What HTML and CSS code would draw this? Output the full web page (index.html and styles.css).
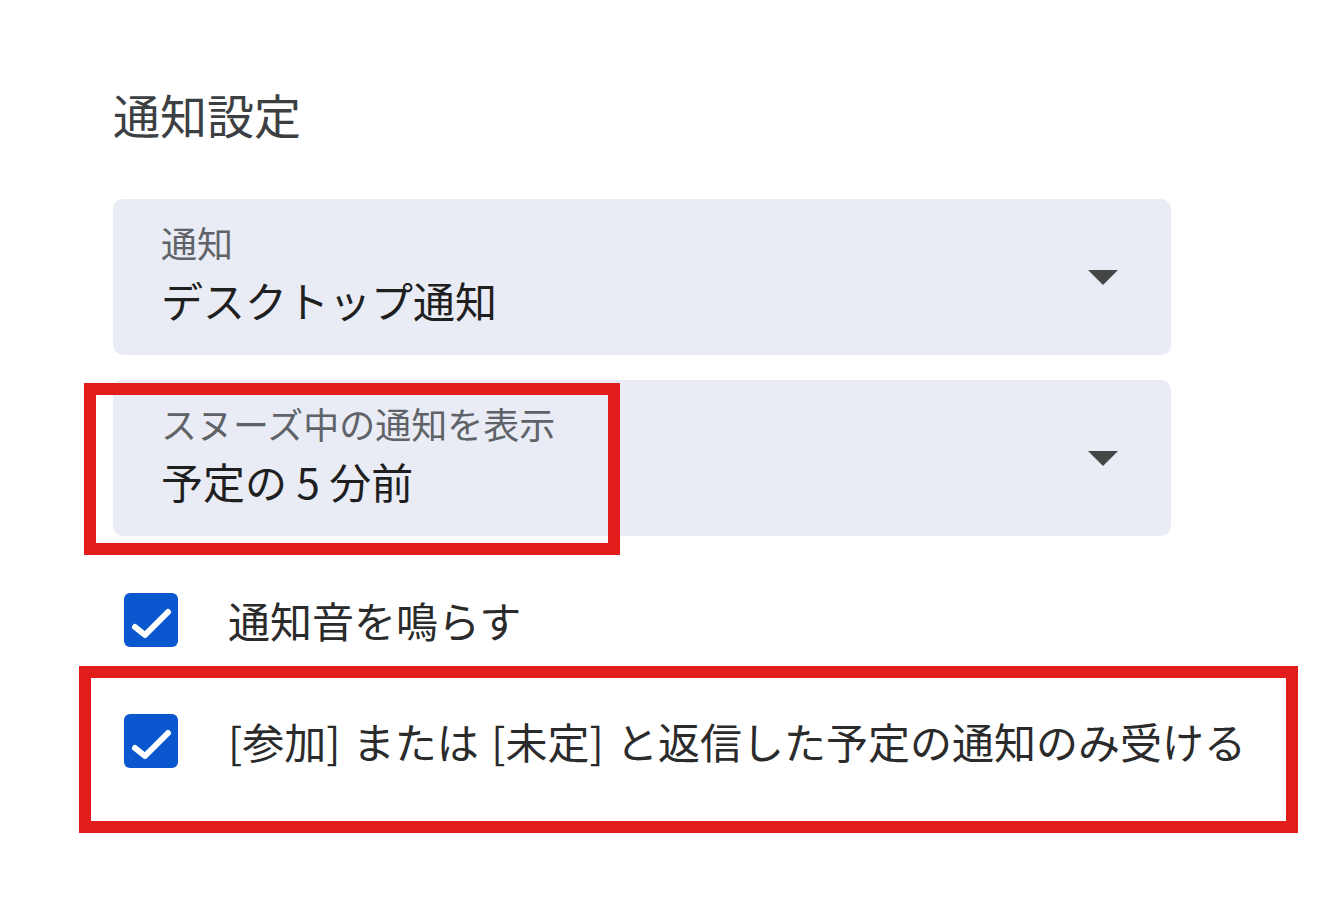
FILE: index.html
```html
<!DOCTYPE html>
<html lang="ja">
<head>
<meta charset="utf-8">
<title>通知設定</title>
<link rel="stylesheet" href="styles.css">
</head>
<body>
<div class="page">
  <h1 class="title">通知設定</h1>
  <div class="selects">
    <div class="select">
      <div class="select-text">
        <div class="label">通知</div>
        <div class="value">デスクトップ通知</div>
      </div>
      <svg class="arrow" width="30" height="15" viewBox="0 0 30 15"><polygon points="0,0 30,0 15,15"/></svg>
    </div>
    <div class="select">
      <div class="select-text">
        <div class="label">スヌーズ中の通知を表示</div>
        <div class="value">予定の 5 分前</div>
      </div>
      <svg class="arrow" width="30" height="15" viewBox="0 0 30 15"><polygon points="0,0 30,0 15,15"/></svg>
    </div>
  </div>
  <div class="checks">
    <div class="check-row">
      <span class="checkbox"><svg width="54" height="54" viewBox="0 0 54 54"><polyline points="11,34 21,42 44,19"/></svg></span>
      <span class="check-label">通知音を鳴らす</span>
    </div>
    <div class="check-row">
      <span class="checkbox"><svg width="54" height="54" viewBox="0 0 54 54"><polyline points="11,34 21,42 44,19"/></svg></span>
      <span class="check-label check-label-long">[参加] または [未定] と返信した予定の通知のみ受ける</span>
    </div>
  </div>
  <div class="mark mark-a"></div>
  <div class="mark mark-b"></div>
</div>
</body>
</html>
```
FILE: styles.css
```css
html, body {
  margin: 0;
  padding: 0;
  background: #ffffff;
}
body {
  font-family: "Noto Sans CJK JP", "Noto Sans", sans-serif;
  color: #1f1f1f;
}
.page {
  position: relative;
  width: 1344px;
  height: 915px;
  box-sizing: border-box;
  padding: 90px 0 0 113px;
  overflow: hidden;
}
.title {
  margin: 0 0 62px 0;
  font-size: 47px;
  line-height: 47px;
  font-weight: 400;
  color: #3c4043;
}
.selects {
  display: flex;
  flex-direction: column;
  gap: 25px;
  width: 1058px;
}
.select {
  display: flex;
  align-items: center;
  justify-content: space-between;
  height: 156px;
  box-sizing: border-box;
  padding: 0 53px 0 48px;
  background: #e9ecf5;
  border-radius: 10px;
}
.select-text {
  align-self: flex-start;
  padding-top: 25px;
  display: flex;
  flex-direction: column;
  gap: 19px;
}
.label {
  font-size: 36px;
  line-height: 36px;
  color: #5f6368;
}
.value {
  font-size: 42px;
  line-height: 42px;
  color: #1f1f1f;
}
.arrow {
  display: block;
  fill: #444746;
}
.checks {
  display: flex;
  flex-direction: column;
  gap: 67px;
  margin-top: 57px;
  padding-left: 11px;
}
.check-row {
  display: flex;
  align-items: center;
  gap: 50px;
}
.checkbox {
  display: block;
  width: 54px;
  height: 54px;
  border-radius: 6px;
  background: #0b57d0;
  flex: none;
}
.checkbox svg {
  display: block;
  fill: none;
  stroke: #ffffff;
  stroke-width: 6;
  stroke-linecap: round;
  stroke-linejoin: round;
}
.check-label {
  font-size: 42px;
  line-height: 42px;
  color: #2b2b2b;
  white-space: nowrap;
}
.check-label-long {
  word-spacing: 3px;
}
.mark {
  position: absolute;
  box-sizing: border-box;
  border: 12px solid #e31c1c;
}
.mark-a {
  left: 84px;
  top: 383px;
  width: 536px;
  height: 172px;
}
.mark-b {
  left: 79px;
  top: 666px;
  width: 1219px;
  height: 167px;
}
```
